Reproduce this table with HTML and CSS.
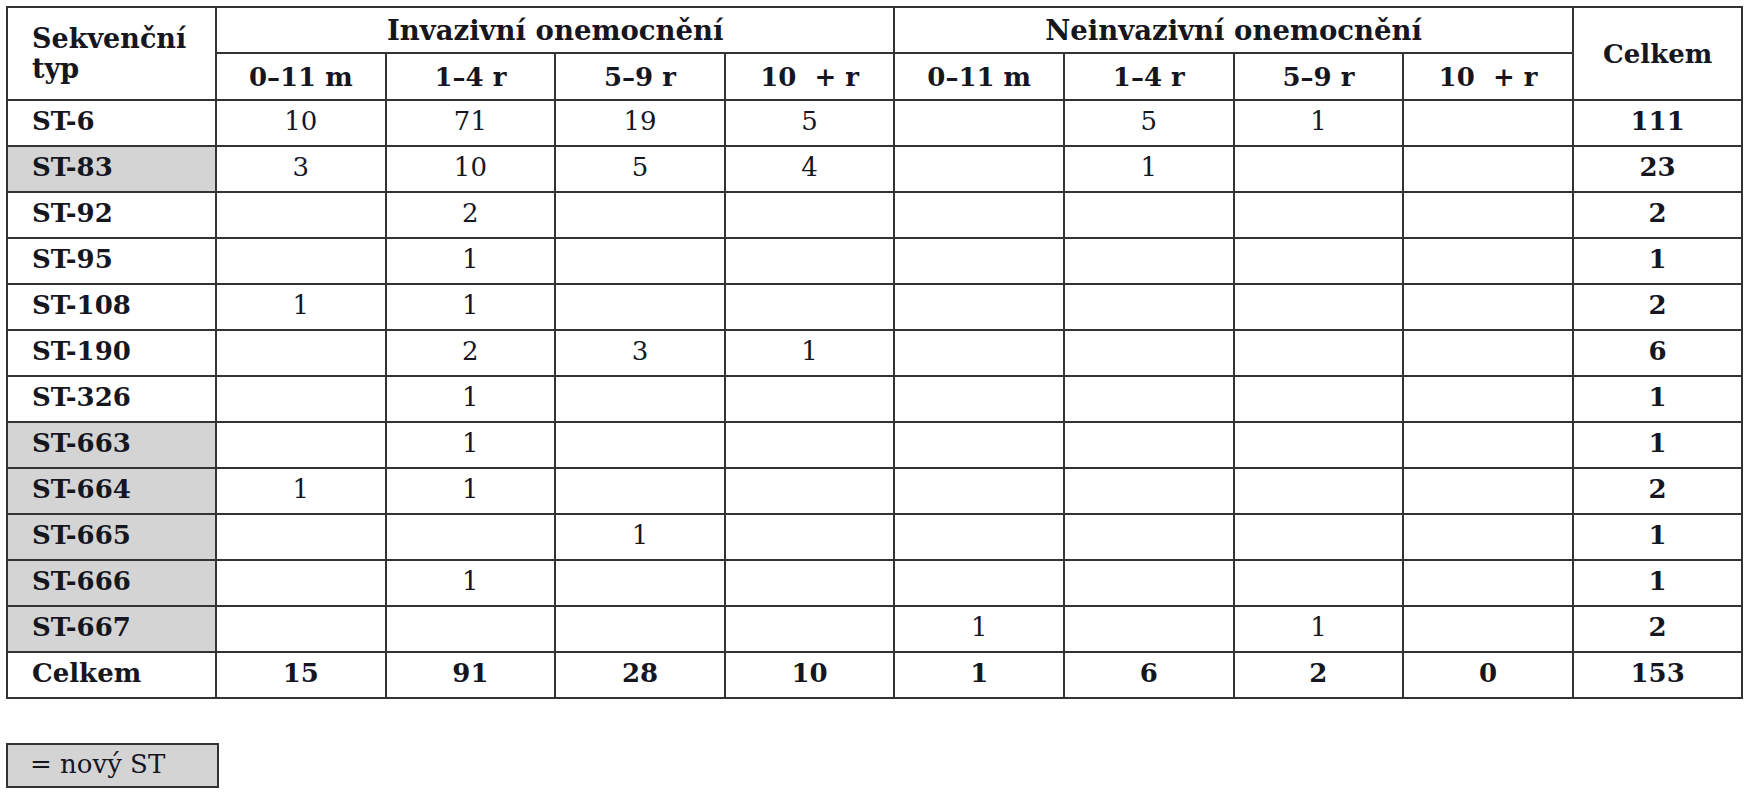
FILE: index.html
```html
<!DOCTYPE html>
<html lang="cs">
<head>
<meta charset="utf-8">
<title>Sekvenční typy</title>
<link rel="stylesheet" href="styles.css">
</head>
<body>
<main class="page">
<table class="st-table">
<colgroup>
<col class="c-first">
<col><col><col><col><col><col><col><col><col>
</colgroup>
<thead>
<tr class="h1">
<th class="lab" rowspan="2">Sekvenční<br>typ</th>
<th class="grp" colspan="4">Invazivní onemocnění</th>
<th class="grp" colspan="4">Neinvazivní onemocnění</th>
<th rowspan="2">Celkem</th>
</tr>
<tr class="h2">
<th>0–11 m</th><th>1–4 r</th><th>5–9 r</th><th>10&nbsp; + r</th>
<th>0–11 m</th><th>1–4 r</th><th>5–9 r</th><th>10&nbsp; + r</th>
</tr>
</thead>
<tbody>
<tr><th class="lab">ST-6</th><td>10</td><td>71</td><td>19</td><td>5</td><td></td><td>5</td><td>1</td><td></td><td class="tot">111</td></tr>
<tr><th class="lab new">ST-83</th><td>3</td><td>10</td><td>5</td><td>4</td><td></td><td>1</td><td></td><td></td><td class="tot">23</td></tr>
<tr><th class="lab">ST-92</th><td></td><td>2</td><td></td><td></td><td></td><td></td><td></td><td></td><td class="tot">2</td></tr>
<tr><th class="lab">ST-95</th><td></td><td>1</td><td></td><td></td><td></td><td></td><td></td><td></td><td class="tot">1</td></tr>
<tr><th class="lab">ST-108</th><td>1</td><td>1</td><td></td><td></td><td></td><td></td><td></td><td></td><td class="tot">2</td></tr>
<tr><th class="lab">ST-190</th><td></td><td>2</td><td>3</td><td>1</td><td></td><td></td><td></td><td></td><td class="tot">6</td></tr>
<tr><th class="lab">ST-326</th><td></td><td>1</td><td></td><td></td><td></td><td></td><td></td><td></td><td class="tot">1</td></tr>
<tr><th class="lab new">ST-663</th><td></td><td>1</td><td></td><td></td><td></td><td></td><td></td><td></td><td class="tot">1</td></tr>
<tr><th class="lab new">ST-664</th><td>1</td><td>1</td><td></td><td></td><td></td><td></td><td></td><td></td><td class="tot">2</td></tr>
<tr><th class="lab new">ST-665</th><td></td><td></td><td>1</td><td></td><td></td><td></td><td></td><td></td><td class="tot">1</td></tr>
<tr><th class="lab new">ST-666</th><td></td><td>1</td><td></td><td></td><td></td><td></td><td></td><td></td><td class="tot">1</td></tr>
<tr><th class="lab new">ST-667</th><td></td><td></td><td></td><td></td><td>1</td><td></td><td>1</td><td></td><td class="tot">2</td></tr>
<tr class="sum"><th class="lab">Celkem</th><td>15</td><td>91</td><td>28</td><td>10</td><td>1</td><td>6</td><td>2</td><td>0</td><td>153</td></tr>
</tbody>
</table>
<div class="legend">= nový ST</div>
</main>
</body>
</html>
```
FILE: styles.css
```css
html, body {
  margin: 0;
  padding: 0;
  background: #ffffff;
}
body {
  font-family: "DejaVu Serif", "Liberation Serif", serif;
  color: #16161f;
}
.page {
  padding: 6px 0 0 6px;
  display: flex;
  flex-direction: column;
  align-items: flex-start;
  gap: 44px;
}
.st-table {
  border-collapse: collapse;
  table-layout: fixed;
  width: 1736px;
  font-size: 26px;
}
.st-table col { width: 169.6px; }
.st-table col.c-first { width: 209px; }
.st-table th,
.st-table td {
  border: 2px solid #333333;
  padding: 0;
  text-align: center;
  vertical-align: middle;
  line-height: 30px;
}
.st-table th { font-weight: bold; }
.st-table td { font-weight: normal; }
.st-table .h1 { height: 46px; }
.st-table .h2 { height: 47px; }
.st-table .grp { font-size: 27.5px; }
.st-table tbody tr { height: 46px; }
.st-table .lab {
  text-align: left;
  padding-left: 24px;
}
.st-table thead .lab { font-size: 27px; }
.st-table tbody td { padding-bottom: 5px; }
.st-table tbody th { padding-bottom: 5px; }
.st-table .new { background: #d4d4d4; }
.st-table .tot,
.st-table .sum td { font-weight: bold; }
.legend {
  box-sizing: border-box;
  width: 213px;
  height: 45px;
  border: 2px solid #333333;
  background: #d4d4d4;
  font-size: 26px;
  line-height: 38px;
  padding-left: 22px;
}
```
